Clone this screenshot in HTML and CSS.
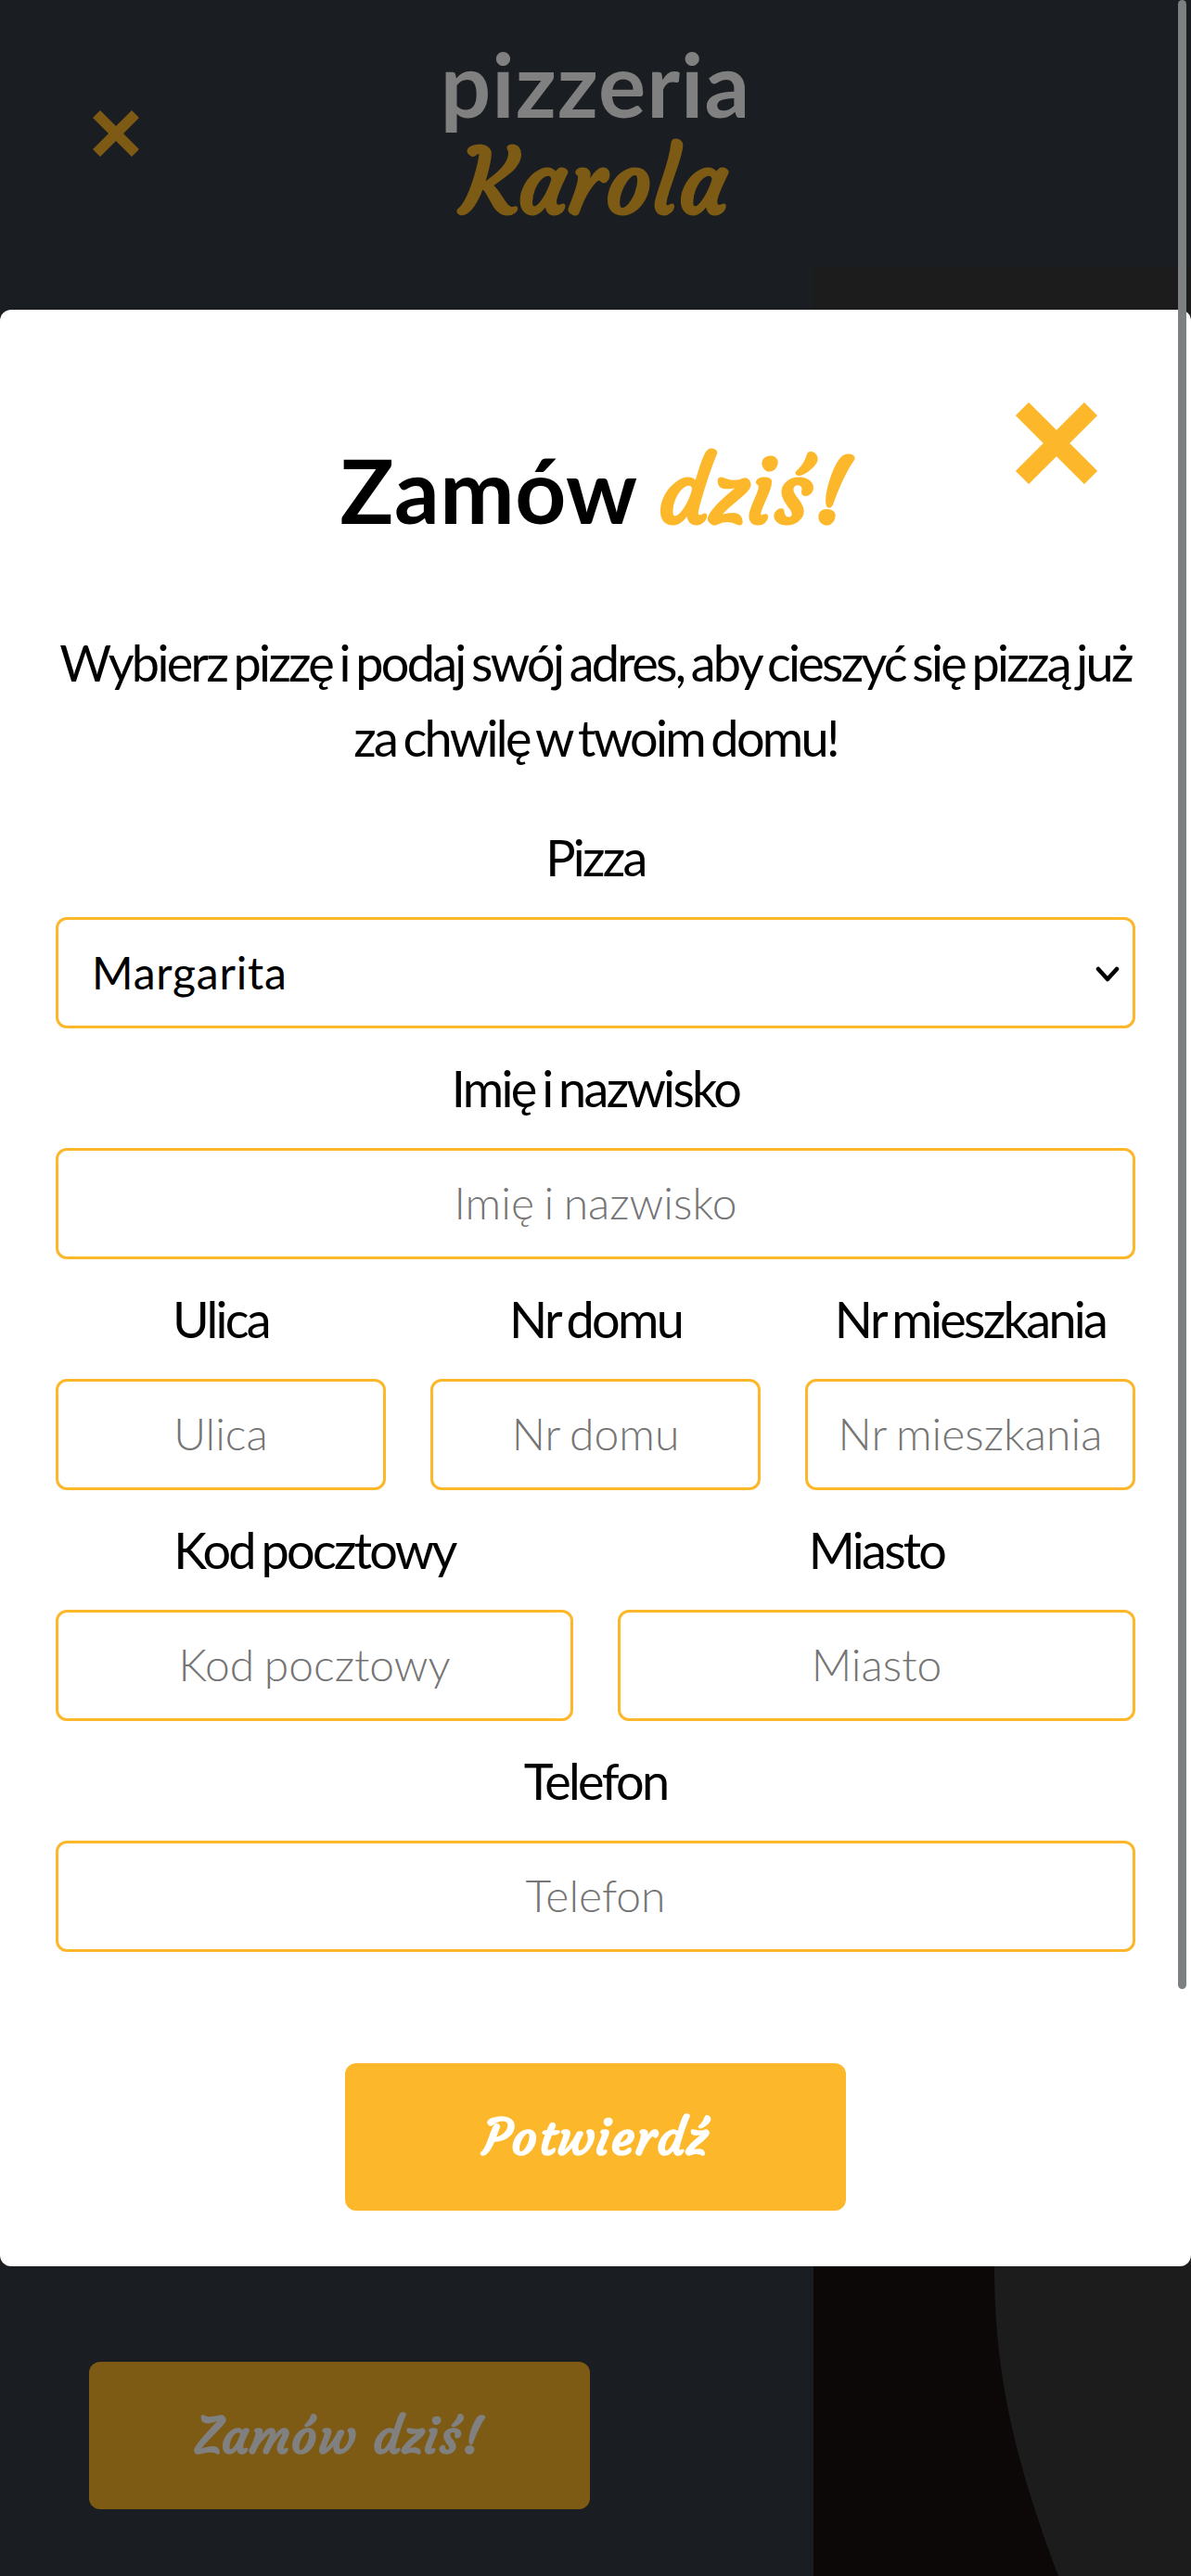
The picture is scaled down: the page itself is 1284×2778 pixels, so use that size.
FILE: index.html
```html
<!DOCTYPE html>
<html lang="pl">
<head>
  <meta charset="utf-8">
  <title>pizzeria Karola</title>
  <link rel="stylesheet" href="styles.css">
</head>
<body>
  <div class="page">
    <header class="header">
      <svg class="menu-close" viewBox="0 0 50 50"><path d="M4 4 46 46M46 4 4 46"/></svg>
      <div class="logo">
        <span class="logo-top">pizzeria</span>
        <span class="logo-name script">Karola</span>
      </div>
    </header>
    <main class="hero">
      <div class="hero-text">
        <a class="button button-dim script"><span class="order-text">Zamów dziś!</span></a>
      </div>
      <svg class="hero-photo" viewBox="0 0 407 2490" preserveAspectRatio="none">
        <rect width="407" height="2490" fill="#1c1c1c"/>
        <path d="M0 1900H195V2156C195 2260 211 2350 264 2490H0Z" fill="#0b0807"/>
      </svg>
    </main>
  </div>

  <section class="modal">
    <svg class="modal-close" viewBox="0 0 88 88"><path d="M7 7 81 81M81 7 7 81"/></svg>
    <h2 class="title">Zamów <span class="title-accent script">dziś!</span></h2>
    <p class="lead">Wybierz pizzę i podaj swój adres, aby cieszyć się pizzą już za chwilę w twoim domu!</p>
    <form class="form">
      <div class="row">
        <label class="field">Pizza
          <span class="select">
            <select class="control control-select"><option>Margarita</option></select>
            <svg class="chevron" viewBox="0 0 26 18"><path d="M3 3 13 14 23 3"/></svg>
          </span>
        </label>
      </div>
      <div class="row">
        <label class="field">Imię i nazwisko <input class="control" placeholder="Imię i nazwisko"></label>
      </div>
      <div class="row">
        <label class="field">Ulica <input class="control" placeholder="Ulica"></label>
        <label class="field">Nr domu <input class="control" placeholder="Nr domu"></label>
        <label class="field">Nr mieszkania <input class="control" placeholder="Nr mieszkania"></label>
      </div>
      <div class="row">
        <label class="field">Kod pocztowy <input class="control" placeholder="Kod pocztowy"></label>
        <label class="field">Miasto <input class="control" placeholder="Miasto"></label>
      </div>
      <div class="row">
        <label class="field">Telefon <input class="control" placeholder="Telefon"></label>
      </div>
      <button class="button button-submit script" type="button"><span class="confirm-text">Potwierdź</span></button>
    </form>
  </section>
  <div class="scrollbar"></div>
</body>
</html>
```
FILE: styles.css
```css
* { box-sizing: border-box; }

body {
  margin: 0;
  height: 2778px;
  position: relative;
  overflow: hidden;
  background: #1a1d21;
  color: #000;
  font-family: Lato, "Open Sans", sans-serif;
}

.script {
  font-family: Courgette, Lato, cursive;
  font-weight: 700;
  letter-spacing: 1px;
}

.page {
  height: 2778px;
  display: flex;
  flex-direction: column;
}

.header {
  height: 288px;
  flex: none;
  display: grid;
  grid-template-columns: 1fr auto 1fr;
  align-items: center;
  padding: 0 100px;
}

.menu-close {
  width: 50px;
  height: 50px;
  fill: none;
  stroke: #7e5b15;
  stroke-width: 11.3;
}

.logo {
  display: flex;
  flex-direction: column;
  align-items: center;
  padding-bottom: 1px;
  font-size: 96px;
  line-height: 108px;
}

.logo-top {
  color: #808080;
  font-weight: 700;
  letter-spacing: 1px;
}

.logo-name {
  color: #7e5b15;
  line-height: 107px;
  letter-spacing: 1.5px;
}

.hero {
  flex: 1;
  display: flex;
  justify-content: space-between;
}

.hero-text {
  display: flex;
  align-items: flex-end;
  padding: 0 0 72px 96px;
}

.hero-photo { width: 407px; height: 2490px; }

.button {
  width: 540px;
  height: 159px;
  display: flex;
  align-items: center;
  justify-content: center;
  padding: 0;
  border: 0;
  border-radius: 12px;
  font-size: 54px;
}

.button-dim { background: #7e5b15; color: #808080; }

.button-submit {
  margin: 96px auto 0;
  background: #fdb72b;
  color: #fff;
}

.modal {
  position: absolute;
  top: 334px;
  left: 0;
  width: 1284px;
  height: 2110px;
  padding: 122px 60px 60px;
  border-radius: 12px;
  background: #fff;
  text-align: center;
}

.modal-close {
  position: absolute;
  top: 100px;
  right: 101px;
  width: 88px;
  height: 88px;
  fill: none;
  stroke: #fdb72b;
  stroke-width: 20;
}

.title {
  margin: 0 0 74px;
  font-size: 96px;
  line-height: 144px;
  letter-spacing: 0.5px;
}

.title-accent { color: #fdb72b; line-height: 1; }

.lead {
  margin: 0 0 48px;
  font-size: 54px;
  line-height: 81px;
  letter-spacing: -2.7px;
  word-spacing: -3.7px;
}

.form {
  display: flex;
  flex-direction: column;
  gap: 24px;
}

.row { display: flex; gap: 48px; }

.field {
  flex: 1 1 0;
  min-width: 0;
  font-size: 54px;
  line-height: 81px;
  letter-spacing: -2.7px;
  word-spacing: -3.5px;
}

.control {
  display: block;
  width: 100%;
  height: 120px;
  margin: 24px 0 0;
  padding: 0 24px 3px;
  border: 3px solid #fdb72b;
  border-radius: 12px;
  background: #fff;
  color: #000;
  font: 300 48px Lato, sans-serif;
  word-spacing: -2.5px;
  text-align: center;
}

.control::placeholder { color: #757575; opacity: 1; }

.select { display: block; position: relative; }

.control-select {
  appearance: none;
  padding: 0 36px 2px;
  font-weight: 400;
  letter-spacing: 0.8px;
  text-align: left;
}

.chevron {
  position: absolute;
  top: 53px;
  right: 17px;
  width: 26px;
  height: 18px;
  fill: none;
  stroke: #000;
  stroke-width: 4.5;
  stroke-linecap: round;
  stroke-linejoin: round;
}

.scrollbar {
  position: absolute;
  top: 0;
  left: 1270px;
  width: 9px;
  height: 2145px;
  border-radius: 5px;
  background: #7d8080;
}
```
